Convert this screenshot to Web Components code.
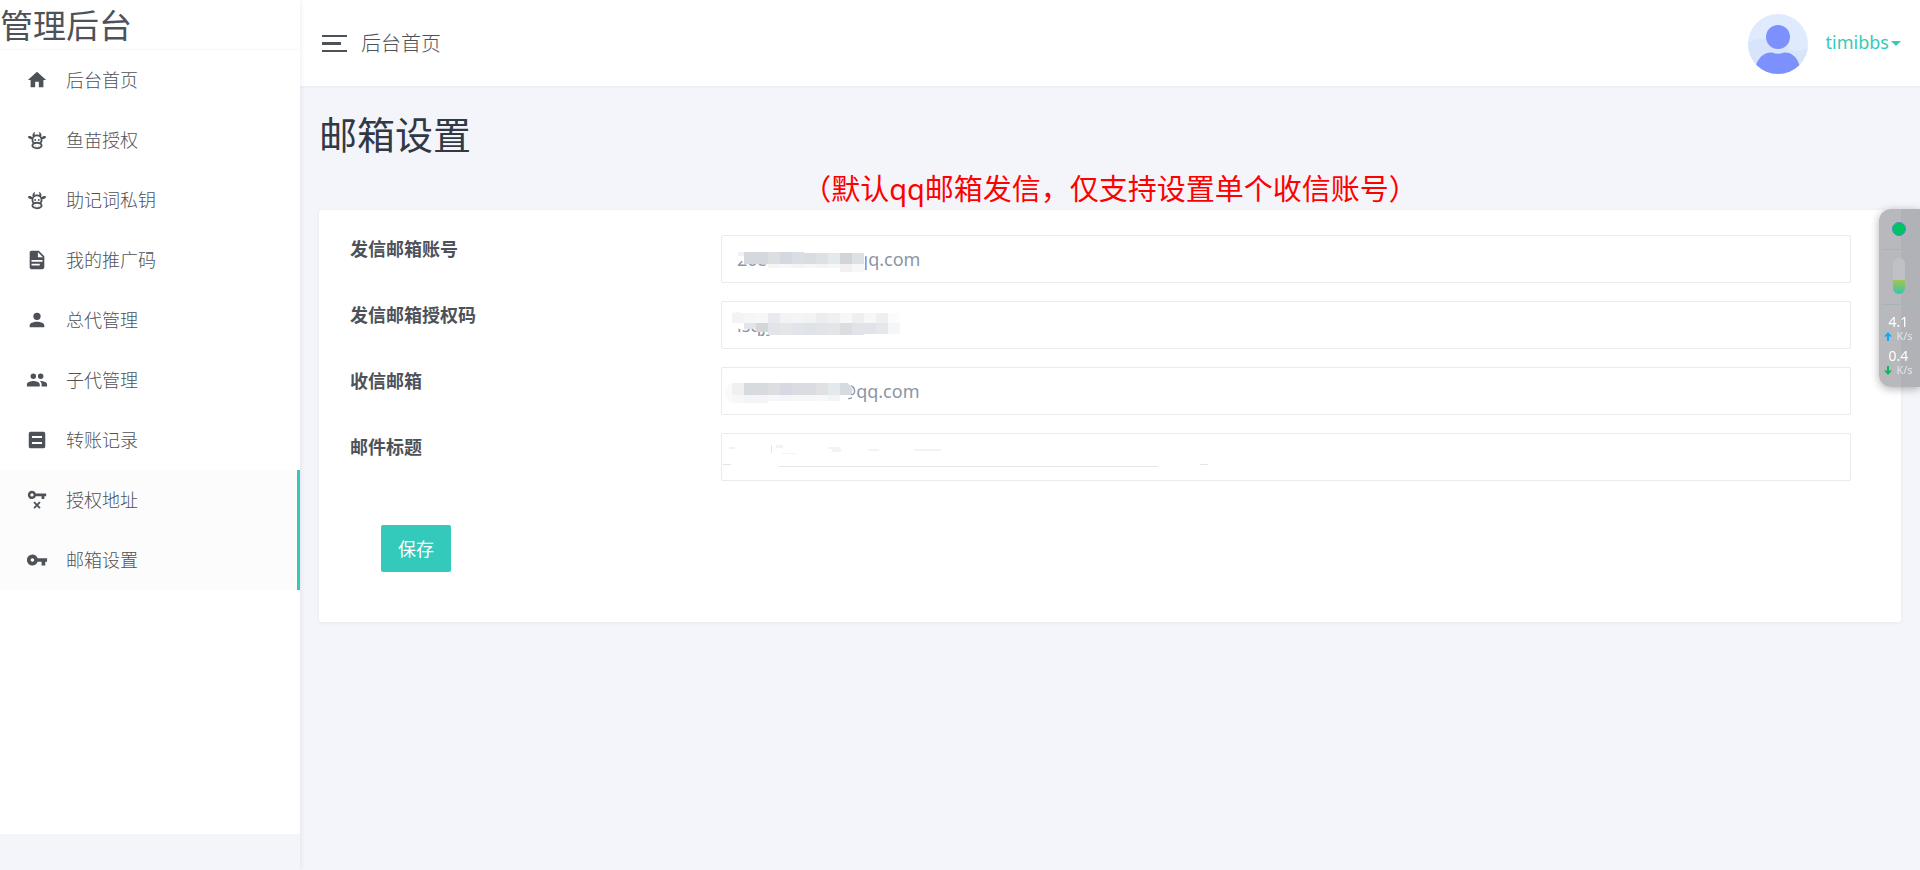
<!DOCTYPE html>
<html lang="zh-CN">
<head>
<meta charset="utf-8">
<title>邮箱设置</title>
<style>
body { margin: 0; background: #f4f5fa; color: #4d5259; font: 18px/26px "Noto Sans", "Noto Sans CJK SC", sans-serif; }
</style>
</head>
<body>
<admin-shell>
  <side-nav slot="nav" heading="管理后台">
    <nav-item icon="home">后台首页</nav-item>
    <nav-item icon="cow">鱼苗授权</nav-item>
    <nav-item icon="cow">助记词私钥</nav-item>
    <nav-item icon="file">我的推广码</nav-item>
    <nav-item icon="user">总代管理</nav-item>
    <nav-item icon="users">子代管理</nav-item>
    <nav-item icon="note">转账记录</nav-item>
    <nav-item icon="keyx" active>授权地址</nav-item>
    <nav-item icon="key" active>邮箱设置</nav-item>
  </side-nav>
  <top-bar slot="header" user="timibbs">后台首页</top-bar>
  <page-heading>
    邮箱设置
    <span slot="note">（默认qq邮箱发信，仅支持设置单个收信账号）</span>
  </page-heading>
  <mail-form></mail-form>
</admin-shell>
<net-monitor></net-monitor>

<script>
const define = (name, render, ready) => customElements.define(name, class extends HTMLElement {
  connectedCallback() {
    if (this.shadowRoot) return;
    this.attachShadow({ mode: 'open' }).innerHTML = render(this);
    if (ready) ready(this);
  }
});

const ICONS = {
  home: '<path d="M10,20V14H14V20H19V12H22L12,3L2,12H5V20H10Z"/>',
  cow: '<path d="M10.5,18A0.5,0.5 0 0,1 11,18.5A0.5,0.5 0 0,1 10.5,19A0.5,0.5 0 0,1 10,18.5A0.5,0.5 0 0,1 10.5,18M13.5,18A0.5,0.5 0 0,1 14,18.5A0.5,0.5 0 0,1 13.5,19A0.5,0.5 0 0,1 13,18.5A0.5,0.5 0 0,1 13.5,18M10,11A1,1 0 0,1 11,12A1,1 0 0,1 10,13A1,1 0 0,1 9,12A1,1 0 0,1 10,11M14,11A1,1 0 0,1 15,12A1,1 0 0,1 14,13A1,1 0 0,1 13,12A1,1 0 0,1 14,11M18,18C18,20.21 15.31,22 12,22C8.69,22 6,20.21 6,18C6,17.1 6.45,16.27 7.2,15.6C6.45,14.6 6,13.35 6,12L6.12,10.78C5.58,10.93 4.93,10.93 4.4,10.78C3.38,10.5 1.84,9.35 2.07,8.55C2.3,7.75 4.21,7.6 5.23,7.9C5.82,8.07 6.45,8.5 6.82,8.96L7.39,8.15C6.79,7.05 7,4 10,3L9.91,3.14C9.63,3.58 8.91,4.97 9.67,6.47C10.39,6.17 11.17,6 12,6C12.83,6 13.61,6.17 14.33,6.47C15.09,4.97 14.37,3.58 14.09,3.14L14,3C17,4 17.21,7.05 16.61,8.15L17.18,8.96C17.55,8.5 18.18,8.07 18.77,7.9C19.79,7.6 21.7,7.75 21.93,8.55C22.16,9.35 20.62,10.5 19.6,10.78C19.07,10.93 18.42,10.93 17.88,10.78L18,12C18,13.35 17.55,14.6 16.8,15.6C17.55,16.27 18,17.1 18,18M12,16C9.79,16 8,16.9 8,18C8,19.1 9.79,20 12,20C14.21,20 16,19.1 16,18C16,16.9 14.21,16 12,16M12,14C13.12,14 14.17,14.21 15.07,14.56C15.65,13.87 16,13 16,12A4,4 0 0,0 12,8A4,4 0 0,0 8,12C8,13 8.35,13.87 8.93,14.56C9.83,14.21 10.88,14 12,14Z"/>',
  file: '<path d="M13,9H18.5L13,3.5V9M6,2H14L20,8V20A2,2 0 0,1 18,22H6C4.89,22 4,21.1 4,20V4C4,2.89 4.89,2 6,2M15,18V16H6V18H15M18,14V12H6V14H18Z"/>',
  user: '<path d="M12,4A4,4 0 0,1 16,8A4,4 0 0,1 12,12A4,4 0 0,1 8,8A4,4 0 0,1 12,4M12,14C16.42,14 20,15.79 20,18V20H4V18C4,15.79 7.58,14 12,14Z"/>',
  users: '<path d="M16,13C15.71,13 15.38,13 15.03,13.05C16.19,13.89 17,15 17,16.5V19H23V16.5C23,14.17 18.33,13 16,13M8,13C5.67,13 1,14.17 1,16.5V19H15V16.5C15,14.17 10.33,13 8,13M8,11A3,3 0 0,0 11,8A3,3 0 0,0 8,5A3,3 0 0,0 5,8A3,3 0 0,0 8,11M16,11A3,3 0 0,0 19,8A3,3 0 0,0 16,5A3,3 0 0,0 13,8A3,3 0 0,0 16,11Z"/>',
  note: '<path fill-rule="evenodd" d="M5,3H19A2,2 0 0,1 21,5V19A2,2 0 0,1 19,21H5A2,2 0 0,1 3,19V5A2,2 0 0,1 5,3ZM6.5,7.7V9.9H17.5V7.7ZM6.5,14.1V16.3H17.5V14.1Z"/>',
  keyx: '<path fill-rule="evenodd" d="M6.5,2C8.46,2 10.13,3.25 10.74,5H22V8H20V11H17V8H10.74C10.13,9.75 8.46,11 6.5,11A4.5,4.5 0 0,1 2,6.5A4.5,4.5 0 0,1 6.5,2ZM6.5,4.7A1.8,1.8 0 0,0 6.5,8.3A1.8,1.8 0 0,0 6.5,4.7Z"/><path d="M8.8,14.2L15.2,20.8M15.2,14.2L8.8,20.8" stroke="currentColor" stroke-width="2"/>',
  key: '<path d="M7,14A2,2 0 0,1 5,12A2,2 0 0,1 7,10A2,2 0 0,1 9,12A2,2 0 0,1 7,14M12.65,10C11.83,7.67 9.61,6 7,6A6,6 0 0,0 1,12A6,6 0 0,0 7,18C9.61,18 11.83,16.33 12.65,14H17V18H21V14H23V10H12.65Z"/>'
};

define('admin-shell', () => `
  <style>
    :host { display: grid; grid-template-columns: 300px minmax(0, 1fr); min-height: 100vh; }
    .nav { display: flex; flex-direction: column; box-shadow: 0 0 6px rgba(0,0,0,.09); z-index: 1; }
    ::slotted([slot=nav]) { flex: 1; }
    main { padding: 22px 19px 24px; }
  </style>
  <div class="nav"><slot name="nav"></slot></div>
  <div><slot name="header"></slot><main><slot></slot></main></div>`);

define('side-nav', el => `
  <style>
    :host { display: flex; flex-direction: column; padding-bottom: 36px; }
    nav { flex: 1; background: #fff; }
    .brand { font-size: 33px; line-height: 52px; font-weight: 400; border-bottom: 1px solid #f7f7f8; height: 50px; box-sizing: border-box; }
  </style>
  <nav><div class="brand">${el.getAttribute('heading')}</div><slot></slot></nav>`);

define('nav-item', el => `
  <style>
    :host { display: block; }
    a { display: flex; align-items: center; gap: 18px; height: 60px; padding-left: 26px; box-sizing: border-box; color: inherit; text-decoration: none; font-weight: 300; }
    :host([active]) a { background: #fcfcfc; border-right: 3px solid #33cabb; }
    svg { width: 22px; height: 22px; fill: currentColor; flex: none; }
  </style>
  <a href="#"><svg viewBox="0 0 24 24" aria-hidden="true">${ICONS[el.getAttribute('icon')]}</svg><span><slot></slot></span></a>`);

define('top-bar', el => `
  <style>
    :host { display: flex; align-items: center; justify-content: space-between; height: 86px; padding: 2px 19px 0 22px; background: #fff; box-shadow: 0 1px 2px rgba(0,0,0,.04); box-sizing: border-box; }
    .left, .right { display: flex; align-items: center; }
    .left { gap: 14px; font-size: 20px; font-weight: 300; }
    button { border: 0; padding: 0; background: none; color: inherit; display: block; }
    svg { display: block; }
    .right { gap: 18px; color: #33cabb; }
    a { display: flex; align-items: center; gap: 2px; color: inherit; text-decoration: none; padding-bottom: 5px; }
    .caret { border: 5px solid transparent; border-top-color: currentColor; border-bottom: 0; margin-top: 4px; }
  </style>
  <div class="left">
    <button aria-label="菜单"><svg width="25" height="18" fill="currentColor"><path d="M0 0h25v2H0zM0 7h19v3H0zM0 15h25v2H0z"/></svg></button>
    <span><slot></slot></span>
  </div>
  <div class="right">
    <svg width="60" height="60" viewBox="0 0 60 60" aria-hidden="true">
      <clipPath id="c"><circle cx="30" cy="30" r="30"/></clipPath>
      <g clip-path="url(#c)"><path fill="#e0eafe" d="M0 0h60v60H0z"/><path fill="#d8e4fa" d="M0 28C10 24 22 22 32 30S50 38 60 34V60H0z"/>
      <circle cx="30" cy="23" r="12" fill="#7c90fe"/><path fill="#7c90fe" d="M7 60V55C9 44 16 38 24 38.500Q30 41 36 38.500C44 38 51 44 52 55V60z"/></g>
    </svg>
    <a href="#">${el.getAttribute('user')}<span class="caret"></span></a>
  </div>`);

define('page-heading', () => `
  <style>
    :host { display: block; text-align: center; }
    h1 { margin: 0; text-align: left; font-size: 38px; line-height: 52px; font-weight: 400; color: #313944; }
    p { margin: 8px 0 0; font-size: 29px; line-height: 42px; color: #f00; font-weight: 400; }
  </style>
  <h1><slot></slot></h1><p><slot name="note"></slot></p>`);

/* Censored parts of a value: rows of 12px cells given as [x, y, height, colours]. */
const cells = rows => rows.map(([x, y, h, list]) =>
  list.split(' ').map((c, i) => `<rect x="${x + i * 12}" y="${y}" width="12" height="${h}" fill="#${c}"/>`).join('')).join('');
const MASKS = {
  account: '<path fill="#fff" d="M17 19H130V17H144V33L140 37H80L42 29H24L17 22z"/><path fill="#f0f1f2" d="M17 17h6v4h-6z"/>' +
    cells([[23,17,12,'d5d9dd d5d9dd dddee0 d4d8e1 dadde2'],[83,18,11,'d9dce0 dfe0e2 e4e9ec d3d4d8 dde1e4'],[47,29,4,'f4f5f5 f7f7f8 f4f4f5 f7f7f7 f4f4f5 f5f6f6 f8f8f8'],[119,29,8,'f1f1f2 f7f7f8']]),
  code: '<path fill="#fff" d="M11 11H180V34H56L40 28H18L11 20z"/><ellipse cx="16" cy="16" rx="5" ry="5" fill="#f2f3f5"/>' +
    cells([[11,12,10,'f2f3f5 f5f6f8 f6f7f8 e9eaf0 f2f3f5 f4f5f7 f2f3f4 ecedef eff0f2 f7f7f8 eeeff1 f6f7f9 eeeff1 fbfcfc'],[23,22,6,'e1e4e8'],[35,22,9,'d4d6da'],[47,22,12,'e1e4e8 e4e6e8 e1e4e8 dfe2e6 e1e4e8 e3e5e7 dcdde0 e0e3e8'],[143,22,11,'e0e4e8 e5e7e9 f5f6f7']]),
  inbox: '<path fill="#fff" d="M8 14H126L132 22 126 34H8z"/><ellipse cx="11" cy="26" rx="7" ry="9" fill="#fafafb"/>' +
    cells([[11,16,12,'f0f0f1 d7dade d7dbde dddee0 d6d9e2 dadce2 d9dce0 e0e1e3 e4e9ec'],[11,28,8,'f7f7f8 f3f4f5 f5f5f7'],[47,28,6,'f7f7f9 f5f5f7 f7f7f8 f6f7f8 f8f8f8 f3f4f5']]) + '<path fill="#d7dade" d="M119 16h8l5 7-3 5h-10z"/>',
  subject: '<path stroke="#e4e5e6" fill="none" d="M50.500 12V20M2 31.500H10M58 33.500H437M479 31.500H487"/><path fill="#f3f3f4" d="M8 14h6v2H8zM55 12h7v3h-7zM61 20h13v1H61zM107 14h12v2h-12zM111 16h9v3h-9zM147 16h11v2h-11zM193 16h27v2h-27z"/>'
};

define('form-row', el => `
  <style>
    :host { display: grid; grid-template-columns: 371fr 1130fr; }
    label { font-weight: 700; padding-top: 1px; }
    .box { position: relative; }
    input { display: block; width: 100%; height: 48px; box-sizing: border-box; padding: 0 15px; border: 1px solid #ebebeb; border-radius: 2px; color: #8b95a5; background: #fff; font: inherit; outline: 0; }
    svg { position: absolute; left: 0; top: 0; pointer-events: none; }
  </style>
  <label for="f">${el.getAttribute('label')}</label>
  <div class="box"><input id="f" type="text"><svg width="500" height="48" aria-hidden="true">${MASKS[el.getAttribute('mask')]}</svg></div>`,
  el => { el.shadowRoot.querySelector('input').value = el.getAttribute('value') || ''; });

const gap = n => '\u00a0'.repeat(n);
define('mail-form', () => `
  <style>
    :host { display: block; background: #fff; border-radius: 3px; box-shadow: 0 1px 4px rgba(0,0,0,.06); }
    form { display: flex; flex-direction: column; gap: 18px; padding: 25px 50px 50px 31px; }
    button { align-self: flex-start; margin: 26px 0 0 31px; height: 47px; padding: 0 17px; border: 0; border-radius: 2px; background: #33cabb; color: #fff; font: inherit; }
  </style>
  <form>
    <form-row label="发信邮箱账号" mask="account" value="208${gap(9)}101@qq.com"></form-row>
    <form-row label="发信邮箱授权码" mask="code" value="isqjy"></form-row>
    <form-row label="收信邮箱" mask="inbox" value="${gap(22)}@qq.com"></form-row>
    <form-row label="邮件标题" mask="subject"></form-row>
    <button type="button">保存</button>
  </form>`);

define('net-monitor', () => `
  <style>
    :host { position: fixed; right: 0; top: 209px; width: 41px; height: 178px; box-sizing: border-box; padding-right: 2px; border-radius: 12px 0 0 12px; background: linear-gradient(90deg, #b8b9bc 22px, #b1b2b7 22px); box-shadow: 0 2px 8px rgba(0,0,0,.3); color: #fff; display: flex; flex-direction: column; align-items: center; z-index: 2; }
    .dot { width: 12px; height: 12px; margin: 13px 0; border: 1px solid #3a92c8; border-radius: 50%; background: #00c364; }
    .tube { width: 33px; display: flex; justify-content: center; padding: 8px 0 10px; border: solid #a8b3b5; border-width: 1px 0; }
    .tube i { width: 12px; height: 36px; border-radius: 6px; background: linear-gradient(#c0c1c4 22px, #a4c64b 22px, #35c4b0); }
    .rate { font-size: 14px; line-height: 16px; text-align: center; margin-top: 9px; }
    .rate + .rate { margin-top: 6px; }
    small { display: flex; align-items: center; gap: 4px; font-size: 11px; line-height: 12px; color: #e4e5e7; }
  </style>
  <span class="dot"></span><span class="tube"><i></i></span>
  <div class="rate">4.1<small><svg width="8" height="9"><path fill="#13a8ff" d="M4 0l4 4.500H5V9H3V4.500H0z"/></svg>K/s</small></div>
  <div class="rate">0.4<small><svg width="8" height="9"><path fill="#0bb85c" d="M4 9l4-4.500H5V0H3V4.500H0z"/></svg>K/s</small></div>`);
</script>
</body>
</html>
